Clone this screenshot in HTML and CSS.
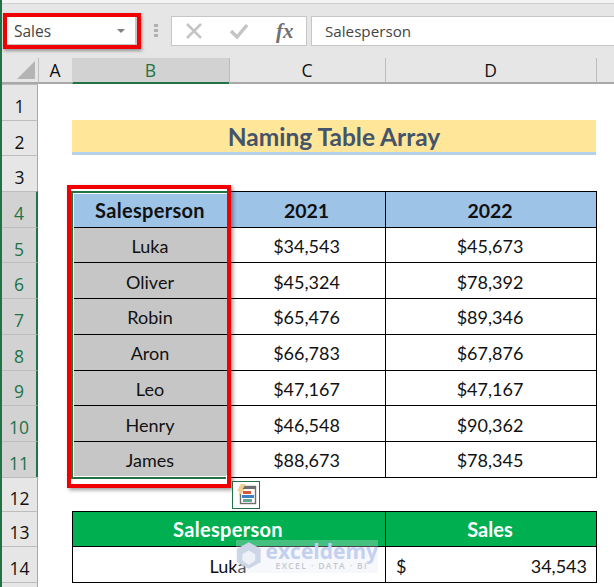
FILE: index.html
```html
<!DOCTYPE html>
<html lang="en">
<head>
<meta charset="utf-8">
<title>Naming Table Array</title>
<link rel="stylesheet" href="styles.css">
</head>
<body>
<div class="app">
  <div class="topstrip"></div>
  <div class="formulabar">
    <div class="namebox">
      <div class="nameinner"><span>Sales</span><span class="caret"></span></div>
    </div>
    <div class="grip"><i></i><i></i><i></i></div>
    <div class="fxbox">
      <svg class="fxicon" width="18" height="18" viewBox="0 0 18 18"><path d="M2 2 L16 16 M16 2 L2 16" stroke="#c4c4c4" stroke-width="2.6" fill="none"/></svg>
      <svg class="fxicon" width="18" height="18" viewBox="0 0 18 18"><path d="M1 9 L7 15 L17 3" stroke="#c4c4c4" stroke-width="3.4" fill="none"/></svg>
      <span class="fx">fx</span>
    </div>
    <div class="formula">Salesperson</div>
  </div>
  <div class="sheet">
    <div class="corner"><span class="tri"></span></div>
    <div class="colh">A</div>
    <div class="colh sel">B</div>
    <div class="colh">C</div>
    <div class="colh">D</div>
    <div class="colh"></div>

    <div class="rowh">1</div><div class="blank full"></div>

    <div class="rowh">2</div><div class="blank"></div><div class="title">Naming Table Array</div><div class="blank"></div>

    <div class="rowh">3</div><div class="blank full"></div>

    <div class="rowh sel">4</div><div class="blank"></div><div class="c th wide">Salesperson</div><div class="c th">2021</div><div class="c th r">2022</div><div class="blank"></div>
    <div class="rowh sel">5</div><div class="blank"></div><div class="c g">Luka</div><div class="c">$34,543</div><div class="c r">$45,673</div><div class="blank"></div>
    <div class="rowh sel">6</div><div class="blank"></div><div class="c g">Oliver</div><div class="c">$45,324</div><div class="c r">$78,392</div><div class="blank"></div>
    <div class="rowh sel">7</div><div class="blank"></div><div class="c g">Robin</div><div class="c">$65,476</div><div class="c r">$89,346</div><div class="blank"></div>
    <div class="rowh sel">8</div><div class="blank"></div><div class="c g">Aron</div><div class="c">$66,783</div><div class="c r">$67,876</div><div class="blank"></div>
    <div class="rowh sel">9</div><div class="blank"></div><div class="c g">Leo</div><div class="c">$47,167</div><div class="c r">$47,167</div><div class="blank"></div>
    <div class="rowh sel">10</div><div class="blank"></div><div class="c g">Henry</div><div class="c">$46,548</div><div class="c r">$90,362</div><div class="blank"></div>
    <div class="rowh sel">11</div><div class="blank"></div><div class="c g b">James</div><div class="c b">$88,673</div><div class="c r b">$78,345</div><div class="blank"></div>

    <div class="rowh">12</div><div class="blank full"></div>

    <div class="rowh">13</div><div class="blank"></div><div class="c gh wide span2">Salesperson</div><div class="c gh r">Sales</div><div class="blank"></div>
    <div class="rowh">14</div><div class="blank"></div><div class="c b span2">Luka</div><div class="c r b acct"><span>$</span><span>34,543</span></div><div class="blank"></div>
    <div class="rowh"></div><div class="blank full"></div>

    <div class="selection"><span class="handle"></span></div>
    <div class="redbox"></div>
    <div class="quick">
      <svg width="26" height="26" viewBox="0 0 26 26">
        <rect x="7.5" y="4.5" width="15" height="17" fill="#fff" stroke="#6e6e6e" stroke-width="1.4"/>
        <rect x="7" y="4" width="16" height="3" fill="#6e6e6e"/>
        <rect x="10" y="9" width="8" height="3" fill="#d9573b"/>
        <rect x="9" y="13" width="12" height="3" fill="#3f7fc4"/>
        <rect x="10" y="17" width="9" height="3" fill="#66a692"/>
        <path d="M8 2 L13 2 L9.5 7 L12 7 L5 15 L7 9 L4 9 Z" fill="#f2cf8b"/>
      </svg>
    </div>
    <div class="mark">
      <svg width="28" height="31" viewBox="0 0 28 31"><path d="M14 1 L27 8 V23 L14 30 L1 23 V8 Z" fill="#ccd6e6"/><path d="M14 10 L21 14 V21 L14 26 L7 21 V14 Z" fill="#eef2f8"/></svg>
      <div class="marktext"><span class="m1">exceldemy</span><span class="m2">EXCEL · DATA · BI</span></div>
    </div>
  </div>
</div>
</body>
</html>
```
FILE: styles.css
```css
* { box-sizing: border-box; }
html, body { margin: 0; padding: 0; background: #fff; }
.app { width: 614px; height: 587px; overflow: hidden; border-left: 2px solid #217346; display: flex; flex-direction: column; }
.topstrip { flex: none; height: 4px; background: #f4f4f4; border-bottom: 1px solid #d0d0d0; }
.formulabar { flex: none; height: 54px; background: #e6e6e6; display: flex; align-items: flex-start; padding: 9px 0 0 1px; font-family: "Open Sans", sans-serif; }
.namebox { flex: none; width: 138px; height: 36px; border: 4px solid #f00000; box-shadow: 1px 2px 3px rgba(0,0,0,.35); }
.nameinner { height: 100%; background: #fff; border-right: 2px solid #c6c6c6; border-bottom: 1px solid #c6c6c6; display: flex; align-items: center; justify-content: space-between; padding: 0 10px 0 7px; font-size: 15.5px; color: #444; }
.caret { width: 0; height: 0; border-left: 4px solid transparent; border-right: 4px solid transparent; border-top: 4px solid #808080; }
.grip { flex: none; width: 30px; display: flex; flex-direction: column; align-items: center; gap: 2px; padding-top: 11px; }
.grip i { width: 4px; height: 3px; background: #b0b0b0; display: block; }
.fxbox { flex: none; width: 136px; height: 30px; margin-top: 3px; background: #fff; border: 1px solid #c6c6c6; display: flex; align-items: center; padding-left: 13px; gap: 27px; }
.fx { font-family: "Liberation Serif", serif; font-style: italic; font-weight: 700; font-size: 21px; line-height: 24px; margin-left: 1px; color: #707070; }
.formula { flex: 1; height: 30px; margin: 3px 0 0 4px; background: #fff; border: 1px solid #c6c6c6; border-right: 0; font-size: 15.2px; color: #444; padding: 4px 13px; line-height: 20px; }
.sheet { position: relative; flex: none; display: grid; grid-template-columns: 36px 34px 157px 156px 211px 18px; grid-template-rows: 26px repeat(11, 35.7px) 34px 35.8px 35.8px 30px; font-family: Lato, sans-serif; font-size: 18px; color: #111; align-content: start; }
.corner { background: #e6e6e6; border-bottom: 2px solid #a8a8a8; position: relative; }
.tri { position: absolute; right: 3px; bottom: 3px; width: 0; height: 0; border-left: 18px solid transparent; border-bottom: 18px solid #b4b4b4; }
.colh { background: #e6e6e6; border-left: 1px solid #bdbdbd; border-bottom: 2px solid #a8a8a8; display: flex; align-items: center; justify-content: center; padding-right: 1px; font-family: "Open Sans", sans-serif; font-size: 17.5px; color: #111; }
.colh.sel { background: #d2d2d2; color: #217346; border-bottom-color: #217346; border-left-color: #d2d2d2; }
.rowh { background: #e6e6e6; border-right: 1px solid #a8a8a8; border-top: 1px solid #bdbdbd; display: flex; align-items: center; justify-content: center; font-family: "Open Sans", sans-serif; font-size: 17.5px; color: #111; padding-top: 7px; }
.rowh.sel { background: #d2d2d2; color: #217346; border-right: 2px solid #217346; }
.full { grid-column: 2 / -1; }
.title { grid-column: 3 / 6; background: #ffe699; border-bottom: 3px solid #b4d0ea; display: flex; align-items: center; justify-content: center; padding-top: 1px; font-weight: 700; font-size: 24.5px; color: #44546a; }
.c { background: #fff; border-left: 1px solid #000; border-top: 1px solid #000; padding: 2px 2px 0 0; display: flex; align-items: center; justify-content: center; }
.r { box-shadow: 1px 0 0 #000; }
.b { box-shadow: 0 1px 0 #000; }
.r.b { box-shadow: 1px 0 0 #000, 0 1px 0 #000, 1px 1px 0 #000; }
.th { background: #9dc3e6; font-weight: 700; font-size: 19.5px; }
.wide { font-size: 20px; letter-spacing: .3px; }
.g { background: #c6c6c6; }
.gh { background: #00b050; color: #fff; font-weight: 700; font-size: 20px; padding-top: 0; }
.span2 { grid-column: span 2; }
.acct { justify-content: space-between; padding: 2px 9px 0 10px; }
.selection { position: absolute; left: 69px; top: 133px; width: 159px; height: 288px; border: 2px solid #217346; box-shadow: inset 0 0 0 1px #fff; pointer-events: none; }
.handle { position: absolute; right: -3px; bottom: -3px; width: 5px; height: 5px; background: #217346; border: 1px solid #fff; }
.redbox { position: absolute; left: 65px; top: 127px; width: 164px; height: 303px; border: 4px solid #f00000; box-shadow: 2px 2px 4px rgba(0,0,0,.4); pointer-events: none; }
.quick { position: absolute; left: 230px; top: 423px; width: 28px; height: 28px; border: 1px solid #217346; background: #fff; }
.quick svg { display: block; }
.mark { position: absolute; left: 234px; top: 482px; width: 142px; height: 33px; background: rgba(225,232,243,.3); display: flex; align-items: flex-start; gap: 4px; }
.marktext { display: flex; flex-direction: column; align-items: center; line-height: 1; }
.m1 { font-family: "Open Sans", sans-serif; font-weight: 700; font-size: 21px; line-height: 22px; color: #c3d0ef; }
.m2 { font-family: "Open Sans", sans-serif; font-weight: 600; font-size: 8.5px; letter-spacing: 1.4px; color: #c3c8d0; }
```
